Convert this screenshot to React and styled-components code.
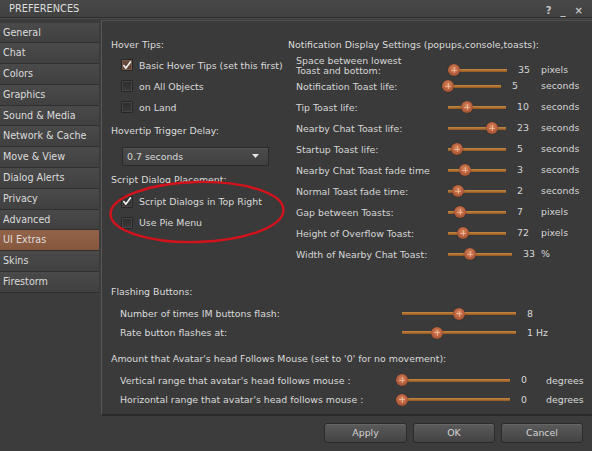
import styled, { createGlobalStyle } from 'styled-components';

const GlobalStyle = createGlobalStyle`
  html, body {
    margin: 0;
    padding: 0;
    background: #3c3c3c;
  }
`;

const tabs = [
  'General',
  'Chat',
  'Colors',
  'Graphics',
  'Sound & Media',
  'Network & Cache',
  'Move & View',
  'Dialog Alerts',
  'Privacy',
  'Advanced',
  'UI Extras',
  'Skins',
  'Firestorm',
];

// label, slider offset, slider width, thumb left, value, unit
const toastRows = [
  { label: 'Notification Toast life:', ml: -6, w: 59, thumb: 0, value: '5', unit: 'seconds' },
  { label: 'Tip Toast life:', ml: 0, w: 58, thumb: 13, value: '10', unit: 'seconds' },
  { label: 'Nearby Chat Toast life:', ml: 0, w: 58, thumb: 38, value: '23', unit: 'seconds' },
  { label: 'Startup Toast life:', ml: 0, w: 58, thumb: 3, value: '5', unit: 'seconds' },
  { label: 'Nearby Chat Toast fade time', ml: 0, w: 58, thumb: 11, value: '3', unit: 'seconds' },
  { label: 'Normal Toast fade time:', ml: 0, w: 58, thumb: 4, value: '2', unit: 'seconds' },
  { label: 'Gap between Toasts:', ml: 0, w: 58, thumb: 6, value: '7', unit: 'pixels' },
  { label: 'Height of Overflow Toast:', ml: 0, w: 58, thumb: 9, value: '72', unit: 'pixels' },
  { label: 'Width of Nearby Chat Toast:', ml: 0, w: 64, thumb: 16, value: '33', unit: '%' },
];

function Slider({ w, ml = 0, thumb }) {
  return (
    <Track $w={w} $ml={ml}>
      <Thumb style={{ left: thumb }} />
    </Track>
  );
}

function Check({ checked, focus, children }) {
  return (
    <CheckRow>
      <Box $focus={focus}>
        {checked && (
          <svg width="11" height="11" viewBox="0 0 11 11">
            <path d="M2 5.6 L4.3 8.4 L9.2 1.6" fill="none" stroke="#f2f2f2" strokeWidth="1.8" strokeLinecap="round" strokeLinejoin="round" />
          </svg>
        )}
      </Box>
      <span>{children}</span>
    </CheckRow>
  );
}

export default function App() {
  return (
    <>
      <GlobalStyle />
      <Window>
        <TitleBar>
          <Title>PREFERENCES</Title>
          <TitleIcons>
            <span>?</span>
            <span>_</span>
            <span>×</span>
          </TitleIcons>
        </TitleBar>

        <Body>
          <Sidebar>
            {tabs.map((t) => (
              <Tab key={t} $active={t === 'UI Extras'}>
                {t}
              </Tab>
            ))}
          </Sidebar>

          <Panel>
            <TopSection>
              <Column>
                <Heading>Hover Tips:</Heading>
                <Check checked focus>
                  Basic Hover Tips (set this first)
                </Check>
                <Check>on All Objects</Check>
                <Check>on Land</Check>
                <Heading $mt={2.5}>Hovertip Trigger Delay:</Heading>
                <Select>
                  <span>0.7 seconds</span>
                  <svg width="7" height="4" viewBox="0 0 7 4">
                    <path d="M0 0 H7 L3.5 4 Z" fill="#e6e6e6" />
                  </svg>
                </Select>
                <Heading $mt={3.5}>Script Dialog Placement:</Heading>
                <Spacer />
                <Check checked>Script Dialogs in Top Right</Check>
                <Check>Use Pie Menu</Check>
              </Column>

              <Column>
                <Heading>Notification Display Settings (popups,console,toasts):</Heading>
                <ToastRow>
                  <TwoLine>
                    Space between lowest
                    <br />
                    Toast and bottom:
                  </TwoLine>
                  <SliderCell $bottom>
                    <Slider w={59} ml={0} thumb={0} />
                    <Value>35</Value>
                  </SliderCell>
                  <Unit $bottom>pixels</Unit>
                </ToastRow>
                {toastRows.map((r) => (
                  <ToastRow key={r.label}>
                    <span>{r.label}</span>
                    <SliderCell>
                      <Slider w={r.w} ml={r.ml} thumb={r.thumb} />
                      <Value>{r.value}</Value>
                    </SliderCell>
                    <Unit>{r.unit}</Unit>
                  </ToastRow>
                ))}
              </Column>
            </TopSection>

            <LowerSection>
              <Heading>Flashing Buttons:</Heading>
              <SubRow $label={282} $mt={2}>
                <span>Number of times IM buttons flash:</span>
                <Slider w={114} thumb={51} />
                <Value>8</Value>
              </SubRow>
              <SubRow $label={282}>
                <span>Rate button flashes at:</span>
                <Slider w={114} thumb={29} />
                <Value>1 Hz</Value>
              </SubRow>
              <Heading $mt={5}>
                Amount that Avatar's head Follows Mouse (set to '0' for no movement):
              </Heading>
              <SubRow $label={276} $mt={2}>
                <span>Vertical range that avatar's head follows mouse :</span>
                <Slider w={114} thumb={0} />
                <Value $w={25}>0</Value>
                <span>degrees</span>
              </SubRow>
              <SubRow $label={276}>
                <span>Horizontal range that avatar's head follows mouse :</span>
                <Slider w={114} thumb={0} />
                <Value $w={25}>0</Value>
                <span>degrees</span>
              </SubRow>
            </LowerSection>

            <Ellipse width="182" height="68" viewBox="0 0 182 68">
              <ellipse cx="91" cy="34" rx="86.5" ry="30" fill="none" stroke="#d3121c" strokeWidth="2.4" transform="rotate(-1.5 91 34)" />
            </Ellipse>
          </Panel>
        </Body>

        <Footer>
          <Button $w={81}>Apply</Button>
          <Button $w={80}>OK</Button>
          <Button $w={80}>Cancel</Button>
        </Footer>
      </Window>
    </>
  );
}

const Window = styled.div`
  position: relative;
  width: 592px;
  height: 451px;
  overflow: hidden;
  display: flex;
  flex-direction: column;
  background: #3c3c3c;
  color: #dadada;
  font-family: 'DejaVu Sans', 'Liberation Sans', sans-serif;
  font-size: 9.4px;
`;

const TitleBar = styled.div`
  height: 17px;
  flex: none;
  display: flex;
  align-items: center;
  justify-content: space-between;
  padding: 0 9px 0 9px;
  background: linear-gradient(#484848, #414141);
  border-bottom: 1px solid #2c2c2c;
  box-shadow: 0 1px 0 #4a4a4a;
`;

const Title = styled.div`
  font-size: 9.8px;
  color: #dedede;
  padding-bottom: 1px;
`;

const TitleIcons = styled.div`
  display: flex;
  gap: 9px;
  padding-top: 4px;
  color: #c4c4c4;
  font-size: 10px;
  font-weight: bold;
`;

const Body = styled.div`
  flex: none;
  height: 396px;
  margin-top: 2px;
  display: flex;
`;

const Sidebar = styled.div`
  width: 101px;
  flex: none;
  padding-top: 2.5px;
`;

const Tab = styled.div`
  height: 19.8px;
  line-height: 19.8px;
  padding-left: 3px;
  margin-right: 2px;
  border-bottom: 1px solid #2f2f2f;
  font-size: 9.6px;
  color: #dcdcdc;
  background: ${(p) =>
    p.$active ? 'linear-gradient(#93634a, #85573c)' : 'linear-gradient(#4a4a4a, #404040)'};
`;

const Panel = styled.div`
  position: relative;
  flex: 1;
  background: #3a3a3a;
  border-left: 1px solid #575757;
  border-top: 1px solid #505050;
  border-bottom: 2px solid #2b2b2b;
  padding: 12.5px 0 0 9px;
`;

const TopSection = styled.div`
  display: grid;
  grid-template-columns: 177px 1fr;
`;

const Column = styled.div`
  display: flex;
  flex-direction: column;
`;

const Heading = styled.div`
  height: 21px;
  line-height: 21px;
  margin-top: ${(p) => p.$mt || 0}px;
  white-space: nowrap;
`;

const Spacer = styled.div`
  height: 1px;
`;

const CheckRow = styled.div`
  height: 21px;
  display: flex;
  align-items: center;
  gap: 6px;
  padding-left: 10px;
`;

const Box = styled.div`
  width: 10px;
  height: 10px;
  border: 1px solid #262626;
  border-radius: 1px;
  display: flex;
  align-items: center;
  justify-content: center;
  background: ${(p) =>
    p.$focus ? 'linear-gradient(#6a4d3e, #5a3f31)' : 'linear-gradient(#2e2e2e, #393939)'};
  box-shadow: inset 0 0 0 1px ${(p) => (p.$focus ? '#7a5a48' : '#454545')};
`;

const Select = styled.div`
  box-sizing: content-box;
  width: 132px;
  height: 17px;
  margin: 5.5px 0 0 11px;
  padding: 0 9px 0 4px;
  display: flex;
  align-items: center;
  justify-content: space-between;
  background: linear-gradient(#4b4b4b, #404040);
  border: 1px solid #2a2a2a;
  border-radius: 2px;
  box-shadow: inset 0 1px 0 #555;
`;

const ToastRow = styled.div`
  height: 21px;
  padding-left: 8px;
  display: grid;
  grid-template-columns: 152px 93px auto;
  align-items: center;
  white-space: nowrap;
  color: #d6d6d6;
`;

const TwoLine = styled.div`
  line-height: 10px;
  align-self: start;
  padding-top: 1.5px;
`;

const SliderCell = styled.div`
  display: flex;
  align-items: center;
  align-self: ${(p) => (p.$bottom ? 'end' : 'center')};
  height: 12px;
`;

const Unit = styled.span`
  align-self: ${(p) => (p.$bottom ? 'end' : 'center')};
  line-height: 12px;
`;

const Track = styled.div`
  position: relative;
  flex: none;
  width: ${(p) => p.$w}px;
  margin-left: ${(p) => p.$ml || 0}px;
  height: 12px;
  background: linear-gradient(#c68b45, #93561f) center / 100% 3px no-repeat;
`;

const Thumb = styled.div`
  position: absolute;
  top: 0;
  width: 12px;
  height: 12px;
  border-radius: 50%;
  background: radial-gradient(circle at 50% 42%, #dc8f66 0%, #bb6440 45%, #8a4125 100%);
  box-shadow: 0 0 1px rgba(0, 0, 0, 0.6);

  &::before,
  &::after {
    content: '';
    position: absolute;
    background: rgba(255, 210, 180, 0.55);
  }
  &::before {
    left: 5.5px;
    top: 3px;
    width: 1px;
    height: 6px;
  }
  &::after {
    left: 3px;
    top: 5.5px;
    width: 6px;
    height: 1px;
  }
`;

const Value = styled.span`
  margin-left: 11px;
  width: ${(p) => (p.$w ? `${p.$w}px` : 'auto')};
  line-height: 12px;
`;

const LowerSection = styled.div`
  margin-top: 16.5px;
  display: flex;
  flex-direction: column;
`;

const SubRow = styled.div`
  height: 19.3px;
  margin-top: ${(p) => p.$mt || 0}px;
  padding-left: 9px;
  display: grid;
  grid-template-columns: ${(p) => p.$label}px auto auto auto;
  justify-content: start;
  align-items: center;
  white-space: nowrap;
`;

const Ellipse = styled.svg`
  position: absolute;
  left: 4px;
  top: 157px;
  pointer-events: none;
`;

const Footer = styled.div`
  flex: 1;
  display: flex;
  justify-content: flex-end;
  align-items: flex-start;
  gap: 6px;
  padding: 7px 9px 0 0;
`;

const Button = styled.div`
  width: ${(p) => p.$w}px;
  height: 18px;
  line-height: 18px;
  text-align: center;
  color: #d4d4d4;
  background: linear-gradient(#5b5b5b, #434343);
  border: 1px solid #2b2b2b;
  border-radius: 3px;
  box-shadow: inset 0 1px 0 #666;
`;
